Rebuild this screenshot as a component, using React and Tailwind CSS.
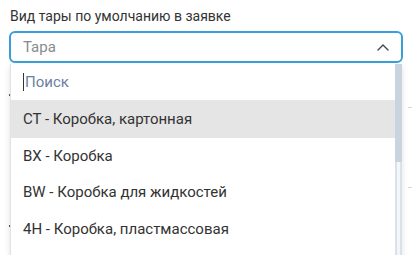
import React from 'react';

const items = [
  'CT - Коробка, картонная',
  'BX - Коробка',
  'BW - Коробка для жидкостей',
  '4H - Коробка, пластмассовая',
];

const ChevronUp = () => (
  <svg className="w-[12px] h-[7px]" viewBox="0 0 12 7" fill="none" stroke="#3f4650" strokeWidth={1.4} strokeLinecap="round" strokeLinejoin="round">
    <path d="M1 6l5-5 5 5" />
  </svg>
);

export default function App() {
  return (
    <div className="relative w-[412px] h-[255px] overflow-hidden bg-white font-['Roboto',sans-serif]">
      {/* фон формы под выпадающим списком */}
      <div className="absolute left-[9px] top-[94px] w-[2px] h-[2px] bg-[#555]" />
      <div className="absolute left-[9px] top-[225px] w-[2px] h-[2px] bg-[#555]" />
      <div className="absolute left-[408px] right-0 top-[107px] h-px bg-[#d6d6d6]" />
      <div className="absolute left-[408px] right-0 top-[187px] h-px bg-[#d6d6d6]" />

      <div className="px-[9px] pt-[6px]">
        <label className="block pl-[1px] mb-[5px] text-[14px] leading-[20px] text-[#333]">
          Вид тары по умолчанию в заявке
        </label>
        <div className="relative">
          <div className="flex items-center justify-between h-[32px] pl-[12px] pr-[12px] border-2 border-[#3a9fd8] rounded-[6px]">
            <span className="text-[15px] text-[#8a8a8a]">Тара</span>
            <span className="flex items-center"><ChevronUp /></span>
          </div>

          <div className="absolute left-[1px] right-[1px] top-[33px] h-[200px] bg-white border-l border-[#e2e2e2] shadow-[0_2px_6px_rgba(0,0,0,0.12)] flex">
            <div className="flex-1 min-w-0">
              <div className="flex items-center h-[37px] pl-[12px] border-b border-[#e6e6e6]">
                <span className="w-px h-[18px] bg-[#333] mr-px" />
                <span className="text-[15px] text-[#6d7fa0]">Поиск</span>
              </div>
              {items.map((t, i) => (
                <div
                  key={t}
                  className={`flex items-center h-[36.5px] pl-[12px] text-[15px] text-[#333] ${i === 0 ? 'bg-[#e5e5e5]' : ''}`}
                >
                  {t}
                </div>
              ))}
            </div>
            {/* полоса прокрутки */}
            <div className="relative w-[7px] bg-[#d9e2ea]">
              <div className="absolute left-[2px] top-0 bottom-0 w-[3px] bg-[#f4f7f9]" />
              <div className="absolute inset-x-0 top-0 h-[98px] bg-[#c9d4de]" />
            </div>
          </div>
        </div>
      </div>
    </div>
  );
}
